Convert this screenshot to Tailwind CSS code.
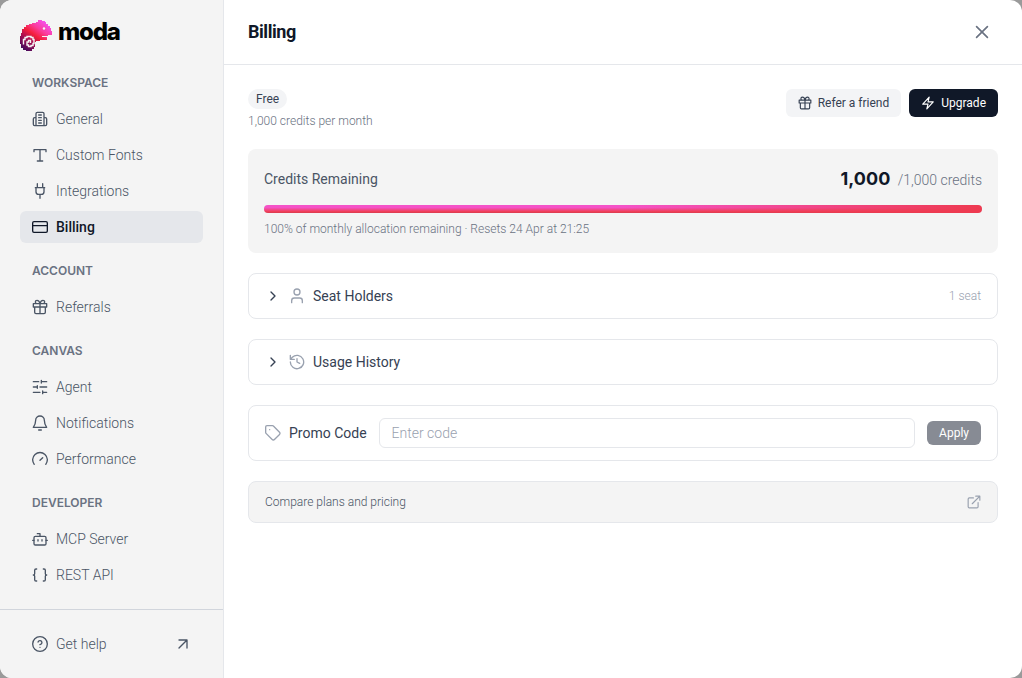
<!DOCTYPE html>
<html lang="en">
<head>
    <meta charset="UTF-8">
    <meta name="viewport" content="width=device-width, initial-scale=1.0">
    <title>Moda - Billing</title>
    <!-- Tailwind CSS CDN -->
    <script src="https://cdn.jsdelivr.net/npm/@tailwindcss/browser@4"></script>
</head>
<body class="bg-[#9a9a9a] font-['Roboto','Liberation_Sans',sans-serif] text-sm font-light text-gray-600">
    <!-- Icon set -->
    <svg class="hidden" aria-hidden="true">
        <symbol id="gift" viewBox="0 0 24 24"><path d="M2 7h20v5H2zM12 7v15M20 12v8a2 2 0 0 1-2 2H6a2 2 0 0 1-2-2v-8M7.500 7a2.500 2.500 0 0 1 0-5C11 2 12 7 12 7s1-5 4.500-5a2.500 2.500 0 0 1 0 5"/></symbol>
        <symbol id="chevron" viewBox="0 0 24 24"><path d="m9 18 6-6-6-6"/></symbol>
    </svg>

    <div class="flex min-h-screen overflow-hidden rounded-xl bg-white">
        <!-- Sidebar -->
        <aside class="flex w-56 shrink-0 flex-col border-r border-gray-200 bg-[#f4f4f4]">
            <a href="#" class="mt-5 ml-5 flex h-8 items-start gap-1.5 self-start text-black" aria-label="moda">
                <svg class="h-8 w-8" viewBox="0 0 32 32">
                    <defs>
                        <linearGradient id="skin" x1="26" y1="2" x2="6" y2="30" gradientUnits="userSpaceOnUse">
                            <stop offset="0" stop-color="#f453f0"/>
                            <stop offset=".28" stop-color="#fb3c9c"/>
                            <stop offset=".5" stop-color="#f51f3c"/>
                            <stop offset=".72" stop-color="#a50e50"/>
                            <stop offset="1" stop-color="#4b0a5c"/>
                        </linearGradient>
                    </defs>
                    <path fill="url(#skin)" d="M18 0h4v1h3v1h1v2h2v2h2v2h1v3h1v4h-4v1h-6v1h5v3h-7v1h-4v1h-1v5h-1v2h-2v2H6v-1H3v-2H1v-4H0v-8h1v-3h1V9h2V7h2V5h3V4h3V3h4V2h2z"/>
                    <path fill="none" stroke="#f4f4f4" stroke-width="1.400" d="M3.500 24.500v-5h1.500v-2h2v-1h4v1h2v2h1v4h-1v2h-2v1H8.500v-1.500H7v-3h1.500v-1.500h2v2.500"/>
                    <circle cx="24" cy="8.500" r="1.200" fill="#f4f4f4"/>
                </svg>
                <span class="font-['Inter',sans-serif] text-2xl/6 font-extrabold tracking-tighter">moda</span>
            </a>

            <nav class="flex flex-1 flex-col gap-5 px-5 pt-[23px] pb-[18px]">
                <div>
                    <h2 class="mb-3 px-3 font-['Inter',sans-serif] text-xs font-semibold text-gray-500">WORKSPACE</h2>
                    <div class="flex flex-col gap-1">
                        <a href="#" class="flex h-8 items-center gap-2 rounded-md px-3">
                            <svg class="h-4 w-4 fill-none stroke-current stroke-2" stroke-linecap="round" stroke-linejoin="round" viewBox="0 0 24 24"><path d="M6 22V4a2 2 0 0 1 2-2h8a2 2 0 0 1 2 2v18ZM6 10H4a2 2 0 0 0-2 2v8a2 2 0 0 0 2 2h2M18 10h2a2 2 0 0 1 2 2v8a2 2 0 0 1-2 2h-2M10 6h4M10 10h4M10 14h4M10 18h4"/></svg>
                            General
                        </a>
                        <a href="#" class="flex h-8 items-center gap-2 rounded-md px-3">
                            <svg class="h-4 w-4 fill-none stroke-current stroke-2" stroke-linecap="round" stroke-linejoin="round" viewBox="0 0 24 24"><path d="M3 7V4h18v3M8 21h8M12 4v17"/></svg>
                            Custom Fonts
                        </a>
                        <a href="#" class="flex h-8 items-center gap-2 rounded-md px-3">
                            <svg class="h-4 w-4 fill-none stroke-current stroke-2" stroke-linecap="round" stroke-linejoin="round" viewBox="0 0 24 24"><path d="M12 23v-6M8 7V1M16 7V1M5 7h14M18 7v6a4 4 0 0 1-4 4h-4a4 4 0 0 1-4-4V7"/></svg>
                            Integrations
                        </a>
                        <a href="#" aria-current="page" class="flex h-8 items-center gap-2 rounded-md bg-gray-200 px-3 font-medium text-gray-900">
                            <svg class="h-4 w-4 fill-none stroke-current stroke-2" stroke-linecap="round" stroke-linejoin="round" viewBox="0 0 24 24"><rect width="22" height="16" x="1" y="4" rx="2"/><path d="M1 10h22"/></svg>
                            Billing
                        </a>
                    </div>
                </div>

                <div>
                    <h2 class="mb-3 px-3 font-['Inter',sans-serif] text-xs font-semibold text-gray-500">ACCOUNT</h2>
                    <a href="#" class="flex h-8 items-center gap-2 rounded-md px-3">
                        <svg class="h-4 w-4 fill-none stroke-current stroke-2" stroke-linecap="round" stroke-linejoin="round"><use href="#gift"/></svg>
                        Referrals
                    </a>
                </div>

                <div>
                    <h2 class="mb-3 px-3 font-['Inter',sans-serif] text-xs font-semibold text-gray-500">CANVAS</h2>
                    <div class="flex flex-col gap-1">
                        <a href="#" class="flex h-8 items-center gap-2 rounded-md px-3">
                            <svg class="h-4 w-4 fill-none stroke-current stroke-2" stroke-linecap="round" stroke-linejoin="round" viewBox="0 0 24 24"><path d="M22 4h-8M10 4H2M22 12H12M8 12H2M22 20h-6M12 20H2M14 2v4M8 10v4M16 18v4"/></svg>
                            Agent
                        </a>
                        <a href="#" class="flex h-8 items-center gap-2 rounded-md px-3">
                            <svg class="h-4 w-4 fill-none stroke-current stroke-2" stroke-linecap="round" stroke-linejoin="round" viewBox="0 0 24 24"><path d="M18.500 8a6.500 6.500 0 0 0-13 0c0 5-1 7-3.500 10.500h20C19.500 15 18.500 13 18.500 8M10 22.500h4"/></svg>
                            Notifications
                        </a>
                        <a href="#" class="flex h-8 items-center gap-2 rounded-md px-3">
                            <svg class="h-4 w-4 fill-none stroke-current stroke-2" stroke-linecap="round" stroke-linejoin="round" viewBox="0 0 24 24"><path d="m12 14 4-4M3.340 20a11 11 0 1 1 17.320 0"/></svg>
                            Performance
                        </a>
                    </div>
                </div>

                <div>
                    <h2 class="mb-3 px-3 font-['Inter',sans-serif] text-xs font-semibold text-gray-500">DEVELOPER</h2>
                    <div class="flex flex-col gap-1">
                        <a href="#" class="flex h-8 items-center gap-2 rounded-md px-3">
                            <svg class="h-4 w-4 fill-none stroke-current stroke-2" stroke-linecap="round" stroke-linejoin="round" viewBox="0 0 24 24"><path d="M12 8V4H8M3 14H1M23 14h-2M15 13v2M9 13v2"/><rect width="18" height="13" x="3" y="8" rx="2"/></svg>
                            MCP Server
                        </a>
                        <a href="#" class="flex h-8 items-center gap-2 rounded-md px-3">
                            <svg class="h-4 w-4 fill-none stroke-current stroke-2" stroke-linecap="round" stroke-linejoin="round" viewBox="0 0 24 24"><path d="M7 3H6a2 2 0 0 0-2 2v5a2 2 0 0 1-2 2 2 2 0 0 1 2 2v5a2 2 0 0 0 2 2h1M17 21h1a2 2 0 0 0 2-2v-5a2 2 0 0 1 2-2 2 2 0 0 1-2-2V5a2 2 0 0 0-2-2h-1"/></svg>
                            REST API
                        </a>
                    </div>
                </div>
            </nav>

            <div class="border-t border-gray-300 px-5 py-[18px]">
                <a href="#" class="flex h-8 items-center gap-2 rounded-md px-3">
                    <svg class="h-4 w-4 fill-none stroke-current stroke-2" stroke-linecap="round" stroke-linejoin="round" viewBox="0 0 24 24"><circle cx="12" cy="12" r="11"/><path d="M9.090 9a3 3 0 0 1 5.830 1c0 2-3 3-3 3M12 17h.010"/></svg>
                    <span class="flex-1">Get help</span>
                    <svg class="h-4 w-4 fill-none stroke-current stroke-2" stroke-linecap="round" stroke-linejoin="round" viewBox="0 0 24 24"><path d="M6 6h12v12M6 18 18 6"/></svg>
                </a>
            </div>
        </aside>

        <!-- Billing panel -->
        <main class="min-w-0 flex-1">
            <header class="flex h-[65px] items-center justify-between border-b border-gray-200 px-6">
                <h1 class="text-lg font-bold tracking-tight text-gray-900">Billing</h1>
                <button class="flex h-8 w-8 items-center justify-center text-gray-500" aria-label="Close">
                    <svg class="h-5 w-5 fill-none stroke-current stroke-2" stroke-linecap="round" stroke-linejoin="round" viewBox="0 0 24 24"><path d="M18.500 5.500l-13 13M5.500 5.500l13 13"/></svg>
                </button>
            </header>

            <div class="flex flex-col gap-5 p-6">
                <!-- Current plan -->
                <div class="flex items-start justify-between">
                    <div class="flex flex-col items-start gap-1 text-xs">
                        <span class="rounded-full bg-gray-100 px-2 py-0.5 font-normal text-gray-700">Free</span>
                        <p class="text-gray-500">1,000 credits per month</p>
                    </div>
                    <div class="flex gap-2 text-xs font-normal">
                        <button class="flex h-7 items-center gap-1.5 rounded-md bg-gray-100 px-3 text-gray-700">
                            <svg class="h-3.5 w-3.5 fill-none stroke-current stroke-2" stroke-linecap="round" stroke-linejoin="round"><use href="#gift"/></svg>
                            Refer a friend
                        </button>
                        <button class="flex h-7 items-center gap-1.5 rounded-md bg-gray-900 px-3 text-white">
                            <svg class="h-3.5 w-3.5 fill-none stroke-current stroke-2" stroke-linecap="round" stroke-linejoin="round" viewBox="0 0 24 24"><path d="M3 14 14 2l-2 8h9L10 22l2-8z"/></svg>
                            Upgrade
                        </button>
                    </div>
                </div>

                <!-- Credits -->
                <section class="rounded-lg bg-[#f4f4f4] p-4">
                    <div class="flex items-center justify-between">
                        <h2 class="font-normal">Credits Remaining</h2>
                        <p class="text-gray-500"><span class="mr-1 font-['Inter',sans-serif] text-lg/7 font-bold text-gray-900">1,000</span> /1,000 credits</p>
                    </div>
                    <div class="mt-3 h-2 rounded-full bg-gray-200" role="progressbar" aria-label="Credits remaining" aria-valuenow="100" aria-valuemin="0" aria-valuemax="100">
                        <div class="h-2 rounded-full bg-[linear-gradient(to_right,transparent_50%,#ee3a50),linear-gradient(#f453c8_30%,#f0405a_80%,#d83a50)]" style="width: 100%"></div>
                    </div>
                    <p class="mt-2 text-xs text-gray-500">100% of monthly allocation remaining · Resets 24 Apr at 21:25</p>
                </section>

                <button class="flex items-center gap-2 rounded-lg border border-gray-200 px-4 py-3 text-gray-700">
                    <svg class="h-4 w-4 fill-none stroke-current stroke-2" stroke-linecap="round" stroke-linejoin="round"><use href="#chevron"/></svg>
                    <svg class="h-4 w-4 fill-none stroke-gray-400 stroke-2" stroke-linecap="round" stroke-linejoin="round" viewBox="0 0 24 24"><circle cx="12" cy="6" r="4.500"/><path d="M4 22v-3a4 4 0 0 1 4-4h8a4 4 0 0 1 4 4v3"/></svg>
                    <span class="font-normal">Seat Holders</span>
                    <span class="ml-auto text-xs text-gray-400">1 seat</span>
                </button>

                <button class="flex items-center gap-2 rounded-lg border border-gray-200 px-4 py-3 text-gray-700">
                    <svg class="h-4 w-4 fill-none stroke-current stroke-2" stroke-linecap="round" stroke-linejoin="round"><use href="#chevron"/></svg>
                    <svg class="h-4 w-4 fill-none stroke-gray-400 stroke-2" stroke-linecap="round" stroke-linejoin="round" viewBox="0 0 24 24"><path d="M2 12a10 10 0 1 0 3-7.100L2 8M2 2v6h6M12 7v5l4 2"/></svg>
                    <span class="font-normal">Usage History</span>
                </button>

                <!-- Promo code -->
                <form class="flex items-center gap-3 rounded-lg border border-gray-200 px-4 py-3">
                    <label for="promo" class="flex items-center gap-2 font-normal text-gray-700">
                        <svg class="h-4 w-4 fill-none stroke-gray-400 stroke-2" stroke-linecap="round" stroke-linejoin="round" viewBox="0 0 24 24"><path d="M12.590 1.590A2 2 0 0 0 11.170 1H3a2 2 0 0 0-2 2v8.170a2 2 0 0 0 .590 1.420l9.200 9.200a2.400 2.400 0 0 0 3.400 0l7.600-7.600a2.400 2.400 0 0 0 0-3.400zM7 7h.010"/></svg>
                        Promo Code
                    </label>
                    <input id="promo" type="text" placeholder="Enter code" class="h-[30px] min-w-0 flex-1 rounded-md border border-gray-200 px-3 placeholder:text-gray-400">
                    <button type="button" class="h-6 rounded-md bg-[#878b94] px-3 text-xs font-normal text-white">Apply</button>
                </form>

                <a href="#" class="flex items-center justify-between rounded-lg border border-gray-200 bg-[#f4f4f4] px-4 py-3 text-xs">
                    Compare plans and pricing
                    <svg class="h-3.5 w-3.5 fill-none stroke-gray-400 stroke-2" stroke-linecap="round" stroke-linejoin="round" viewBox="0 0 24 24"><path d="M15 2h7v7M9 15 22 2M19 13v7a2 2 0 0 1-2 2H4a2 2 0 0 1-2-2V7a2 2 0 0 1 2-2h7"/></svg>
                </a>
            </div>
        </main>
    </div>
</body>
</html>
